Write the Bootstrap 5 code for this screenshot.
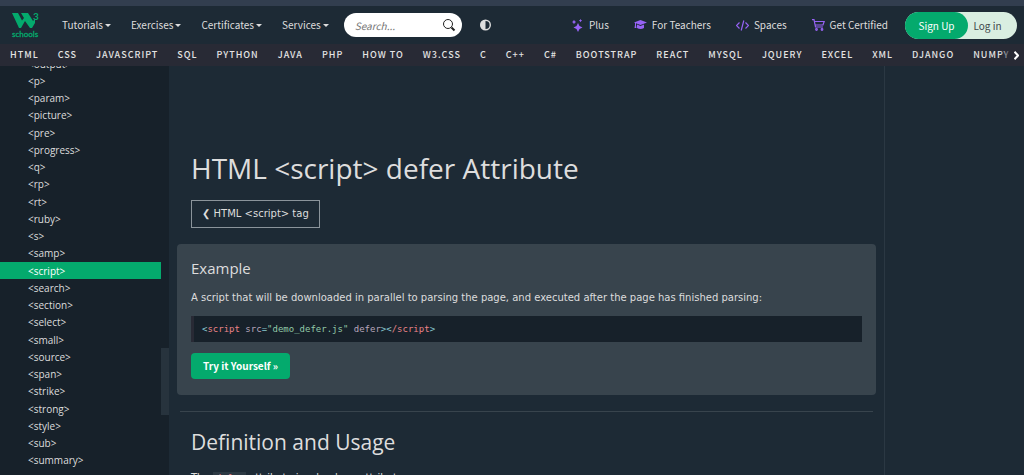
<!DOCTYPE html>
<html lang="en">
<head>
<meta charset="utf-8">
<meta name="viewport" content="width=device-width, initial-scale=1">
<title>HTML script defer Attribute</title>
<link href="https://cdn.jsdelivr.net/npm/bootstrap@5.3.0/dist/css/bootstrap.min.css" rel="stylesheet">
<style>
  :root { --page: #1d2a35; --panel: #38444d; --deep: #17212a; --green: #04aa6d; --ink: #dddddd; }
  html, body { height: 100%; }
  body { background: var(--page); color: var(--ink); font-family: "DejaVu Sans", Verdana, sans-serif; font-size: 10px; line-height: 16px; overflow: hidden; }
  a { text-decoration: none; }
  .site-font { font-family: "Noto Sans CJK SC", "Source Sans Pro", sans-serif; line-height: 16px; }
  .top-strip { height: 6px; background: #323e4f; }
  .top-nav { height: 38px; padding: 0 7px 0 12px; font-size: 10px; }
  .top-nav a { color: var(--ink); white-space: nowrap; }
  .brand-mark { width: 28px; margin-right: 22px; }
  .caret { width: 0; height: 0; border: 3px solid transparent; border-top-color: var(--ink); border-bottom: 0; margin-left: 2px; }
  .menu-links { gap: 20px; margin-right: 15px; }
  .search-box { width: 118px; height: 24px; }
  .search-box input { height: 24px; min-height: 0; font-size: 10px; font-style: italic; padding: 0 28px 0 11px; border: 0; color: #444; background: #fff; }
  .search-box input::placeholder { color: #757575; }
  .search-box button { right: 6px; top: 5px; line-height: 0; }
  .theme-btn { margin-left: 17px; line-height: 0; }
  .tool-links { gap: 25px; margin-right: 17px; }
  .tool-links a { gap: 5px; }
  .auth { background: #d9eee1; height: 27px; }
  .auth a { font-size: 10px; line-height: 27px; padding: 0; border: 0; }
  .auth .sign-up { width: 63px; background: var(--green); color: #fff; }
  .auth .log-in { width: 49px; padding-right: 10px; color: #40474c; }
  .topic-bar { height: 22px; background: #282a35; font-size: 9px; font-weight: 500; padding-left: 10px; }
  .topic-links { gap: 19px; overflow: hidden; }
  .topic-links a { color: #e4e4e4; letter-spacing: 1px; white-space: nowrap; }
  .topic-next { right: 0; top: 0; height: 22px; width: 24px; background: linear-gradient(90deg, transparent, #282a35 50%); padding: 0 5px 0 0; line-height: 0; }
  .main-row { min-height: 0; }
  .side-menu { width: 169px; background: var(--deep); font-family: "Open Sans", "Segoe UI", sans-serif; }
  .side-links { margin-top: -11px; width: 161px; }
  .side-links a { font-size: 10px; line-height: 15px; padding-top: 2px; padding-left: 28px; color: var(--ink); }
  .side-links a:nth-child(4n) { padding-bottom: 1px; }
  .side-links a.current { background: var(--green); color: #fff; }
  .side-thumb { width: 8px; height: 67px; background: #27333d; margin-top: 282px; }
  .content { min-width: 0; padding: 81px 8px 0; border-right: 1px solid #2b3843; overflow: hidden; }
  .right-rail { width: 139px; }
  .inset { padding-left: 14px; padding-right: 14px; }
  h1, h2, h3 { font-family: "Open Sans", "Segoe UI", sans-serif; font-weight: 400; margin: 0; }
  h1 { font-size: 28px; line-height: 42px; }
  h2 { font-size: 21px; line-height: 32px; }
  h3 { font-size: 15px; line-height: 24px; }
  .back-btn { border: 1px solid #8b949b; border-radius: 0; color: var(--ink); font-size: 10px; line-height: 16px; padding: 5px 10px; margin: 11px 0 16px; }
  .example { background: var(--panel); border-radius: 4px; padding-top: 12px; padding-bottom: 16px; }
  .inset p { margin: 10px 0; }
  .inset h2 + p { margin-top: 12px; }
  .code-box { background: var(--deep); border-left: 3px solid #282a35; font-family: "DejaVu Sans Mono", monospace; font-size: 9px; line-height: 16px; padding: 5px 8px; margin: 0 0 11px; }
  .try-btn { background: var(--green); color: #fff; font-size: 10px; line-height: 16px; font-weight: 700; border: 0; border-radius: 4px; padding: 5px 12px; }
  .divider { border-top: 1px solid #38444d; opacity: 1; margin: 16px 3px 14px; }
  .word-code { background: #2c3943; color: #f27f83; font-family: "DejaVu Sans Mono", monospace; font-size: 9px; padding: 1px 3px; }
  .t-mark { color: #88c6cf; } .t-tag { color: #e88388; } .t-attr { color: #b8a6ba; } .t-val { color: #92c9a8; }
</style>
</head>
<body class="d-flex flex-column">
<div class="top-strip flex-shrink-0"></div>
<nav class="top-nav site-font d-flex align-items-center flex-shrink-0">
  <a class="brand-mark" href="#" aria-label="W3Schools home"><svg class="d-block overflow-visible" width="28" height="28" viewBox="0 0 28 28" font-family="Lato, sans-serif" font-weight="700" fill="#04aa6d"><path d="M0 2h6l4 7.500L12 7 9 2h7l5 8 2-2v4l-3 5h-2l-5-7-4 7H7z"/><text x="21" y="9" font-size="10">3</text><text x="0" y="26" font-size="8" font-weight="400" stroke="#04aa6d" stroke-width=".3">schools</text></svg></a>
  <div class="menu-links d-flex">
    <a class="d-flex align-items-center" href="#">Tutorials<span class="caret"></span></a>
    <a class="d-flex align-items-center" href="#">Exercises<span class="caret"></span></a>
    <a class="d-flex align-items-center" href="#">Certificates<span class="caret"></span></a>
    <a class="d-flex align-items-center" href="#">Services<span class="caret"></span></a>
  </div>
  <form class="search-box position-relative">
    <input class="form-control rounded-pill" type="text" placeholder="Search..." aria-label="Search">
    <button class="btn p-0 border-0 position-absolute" type="button" aria-label="Search"><svg width="14" height="14" viewBox="0 0 14 14" fill="none" stroke="#222"><circle cx="6" cy="6" r="4.500"/><path d="M9.500 9.500l3 3" stroke-width="2"/></svg></button>
  </form>
  <button class="theme-btn btn p-0 border-0" type="button" aria-label="Toggle dark mode"><svg width="13" height="12" viewBox="0 0 12 12"><circle cx="6" cy="6" r="4.800" fill="none" stroke="#ddd" stroke-width="1.400"/><path d="M6 1a5 5 0 0 0 0 10z" fill="#ddd"/></svg></button>
  <div class="tool-links d-flex ms-auto">
    <a class="d-flex align-items-center" href="#"><svg width="12" height="13" viewBox="0 0 12 13" fill="#9763f6"><path d="M6 4l1.500 3L10.500 8.500 7.500 10 6 13 4.500 10 1.500 8.500l3-1.500zM2 .8l.8 1.400L4.200 3l-1.400.8L2 5.200l-.8-1.400L-.2 3l1.400-.8zM8.500 0l.6 1 1 .6-1 .6-.6 1-.6-1-1-.6 1-.6z"/></svg>Plus</a>
    <a class="d-flex align-items-center" href="#"><svg width="13" height="10" viewBox="0 0 13 10" fill="#9763f6"><path d="M6.500 0L13 2.500 6.500 5 2 3.300V5l.5 3H.5L1 5V3L0 2.500zM3 4.500L6.500 6 10 4.500V8Q6.500 10 3 8z"/></svg>For Teachers</a>
    <a class="d-flex align-items-center" href="#"><svg width="13" height="11" viewBox="0 0 13 11" fill="none" stroke="#9763f6" stroke-width="1.200"><path d="M3.500 2.500l-3 3 3 3M9.500 2.500l3 3-3 3M7.800.5l-2.600 10"/></svg>Spaces</a>
    <a class="d-flex align-items-center" href="#"><svg width="13" height="12" viewBox="0 0 13 12" fill="none" stroke="#9763f6" stroke-width="1.200"><path d="M0 .7h2L3.500 8H11M2.300 2.500h9.900L11 6H3"/><circle cx="4.500" cy="10.500" r=".8"/><circle cx="10" cy="10.500" r=".8"/></svg>Get Certified</a>
  </div>
  <div class="auth d-flex rounded-pill">
    <a class="btn sign-up rounded-pill" href="#">Sign Up</a><a class="btn log-in" href="#">Log in</a>
  </div>
</nav>
<nav class="topic-bar site-font position-relative d-flex align-items-center flex-shrink-0">
  <div class="topic-links d-flex">
    <a href="#">HTML</a><a href="#">CSS</a><a href="#">JAVASCRIPT</a><a href="#">SQL</a><a href="#">PYTHON</a><a href="#">JAVA</a><a href="#">PHP</a><a href="#">HOW TO</a><a href="#">W3.CSS</a><a href="#">C</a><a href="#">C++</a><a href="#">C#</a><a href="#">BOOTSTRAP</a><a href="#">REACT</a><a href="#">MYSQL</a><a href="#">JQUERY</a><a href="#">EXCEL</a><a href="#">XML</a><a href="#">DJANGO</a><a href="#">NUMPY</a>
  </div>
  <button class="topic-next btn border-0 rounded-0 position-absolute text-end" type="button" aria-label="Next topics"><svg width="5" height="9" viewBox="0 0 5 9" fill="none" stroke="#fff" stroke-width="2"><path d="M.5.7L4 4.500.5 8.300"/></svg></button>
</nav>
<div class="main-row d-flex flex-grow-1 overflow-hidden">
  <aside class="side-menu d-flex flex-shrink-0 overflow-hidden">
    <div class="side-links d-flex flex-column">
      <a href="#">&lt;output&gt;</a>
      <a href="#">&lt;p&gt;</a>
      <a href="#">&lt;param&gt;</a>
      <a href="#">&lt;picture&gt;</a>
      <a href="#">&lt;pre&gt;</a>
      <a href="#">&lt;progress&gt;</a>
      <a href="#">&lt;q&gt;</a>
      <a href="#">&lt;rp&gt;</a>
      <a href="#">&lt;rt&gt;</a>
      <a href="#">&lt;ruby&gt;</a>
      <a href="#">&lt;s&gt;</a>
      <a href="#">&lt;samp&gt;</a>
      <a class="current" href="#">&lt;script&gt;</a>
      <a href="#">&lt;search&gt;</a>
      <a href="#">&lt;section&gt;</a>
      <a href="#">&lt;select&gt;</a>
      <a href="#">&lt;small&gt;</a>
      <a href="#">&lt;source&gt;</a>
      <a href="#">&lt;span&gt;</a>
      <a href="#">&lt;strike&gt;</a>
      <a href="#">&lt;strong&gt;</a>
      <a href="#">&lt;style&gt;</a>
      <a href="#">&lt;sub&gt;</a>
      <a href="#">&lt;summary&gt;</a>
    </div>
    <div class="side-thumb"></div>
  </aside>
  <main class="content flex-grow-1">
    <div class="inset">
      <h1>HTML &lt;script&gt; defer Attribute</h1>
      <a class="btn back-btn" href="#">❮ HTML &lt;script&gt; tag</a>
    </div>
    <section class="example inset">
      <h3>Example</h3>
      <p>A script that will be downloaded in parallel to parsing the page, and executed after the page has finished parsing:</p>
      <pre class="code-box"><span class="t-mark">&lt;</span><span class="t-tag">script</span> <span class="t-attr">src</span><span class="t-mark">=</span><span class="t-val">"demo_defer.js"</span> <span class="t-attr">defer</span><span class="t-mark">&gt;&lt;</span><span class="t-tag">/script</span><span class="t-mark">&gt;</span></pre>
      <a class="btn try-btn site-font" href="#">Try it Yourself »</a>
    </section>
    <hr class="divider">
    <div class="inset">
      <h2>Definition and Usage</h2>
      <p>The <code class="word-code">defer</code> attribute is a boolean attribute.</p>
    </div>
  </main>
  <div class="right-rail flex-shrink-0"></div>
</div>
<script src="https://cdn.jsdelivr.net/npm/bootstrap@5.3.0/dist/js/bootstrap.bundle.min.js"></script>
</body>
</html>
